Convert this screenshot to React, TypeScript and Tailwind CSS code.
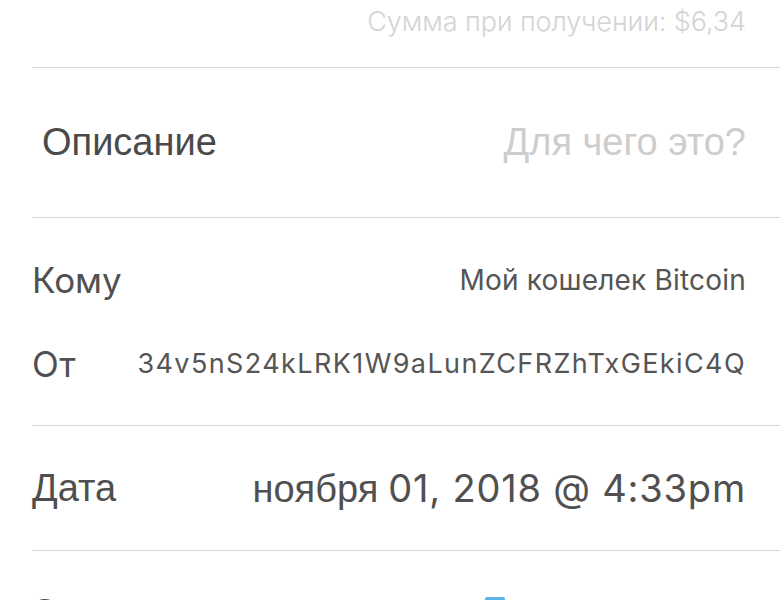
import React from "react";

const helv = "font-['Liberation_Sans',Arial,sans-serif]";
const geo = "font-['Inter','DejaVu_Sans',sans-serif]";

export default function App() {
  return (
    <div className="w-[780px] h-[600px] overflow-hidden bg-white">
      {/* Amount on receive */}
      <div className={`h-[67px] flex justify-end items-start pt-[4px] pr-[34px] ${geo}`}>
        <span className="text-[27px] font-light text-[#d4d4d4] leading-[36px] tracking-[-0.1px]">Сумма при получении: $6,34</span>
      </div>
      <div className="ml-[32px] h-px bg-[#d4d4d4]" />

      {/* Description */}
      <div className={`h-[149px] flex items-center justify-between pl-[42px] pr-[34px] ${helv}`}>
        <span className="text-[38px] text-[#4a4a4a]">Описание</span>
        <span className="text-[38px] text-[#cdcdcd]">Для чего это?</span>
      </div>
      <div className="ml-[32px] h-px bg-[#d4d4d4]" />

      {/* To / From */}
      <div className={`h-[207px] pt-[20px] pl-[32px] pr-[34px] ${geo}`}>
        <div className="h-[84px] flex items-center justify-between">
          <span className="text-[35px] text-[#505050]">Кому</span>
          <span className="text-[28px] text-[#555] tracking-[0.2px]">Мой кошелек Bitcoin</span>
        </div>
        <div className="h-[84px] flex items-center justify-between">
          <span className="text-[35px] text-[#505050] tracking-[0.5px]">От</span>
          <span className="text-[27px] text-[#555] tracking-[1.4px]">34v5nS24kLRK1W9aLunZCFRZhTxGEkiC4Q</span>
        </div>
      </div>
      <div className="ml-[32px] h-px bg-[#d4d4d4]" />

      {/* Date */}
      <div className="h-[124px] flex items-center justify-between pl-[32px] pr-[34px]">
        <span className={`text-[38px] text-[#4f4f4f] ${helv}`}>Дата</span>
        <span className="text-[38px] text-[#505050]">
          <span className={helv}>ноября</span>{" "}
          <span className={`${geo} tracking-[0.8px]`}>01, 2018 @ 4:33pm</span>
        </span>
      </div>
      <div className="ml-[32px] h-px bg-[#d4d4d4]" />

      {/* Next row, cut off */}
      <div className="relative h-[49px] pl-[30px] pt-[43px]">
        <span className={`block text-[38px] leading-none text-[#4f4f4f] ${helv}`}>Статус</span>
        <div className="absolute left-[485px] top-[46px] w-[20px] h-[10px] rounded-[2px] bg-[#5ab4e6]" />
      </div>
    </div>
  );
}
